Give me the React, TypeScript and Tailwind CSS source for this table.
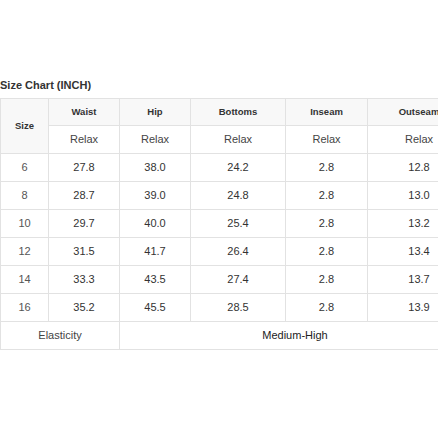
import React from 'react';

const rows = [
  { size: '6', waist: '27.8', hip: '38.0', bottoms: '24.2', inseam: '2.8', outseam: '12.8' },
  { size: '8', waist: '28.7', hip: '39.0', bottoms: '24.8', inseam: '2.8', outseam: '13.0' },
  { size: '10', waist: '29.7', hip: '40.0', bottoms: '25.4', inseam: '2.8', outseam: '13.2' },
  { size: '12', waist: '31.5', hip: '41.7', bottoms: '26.4', inseam: '2.8', outseam: '13.4' },
  { size: '14', waist: '33.3', hip: '43.5', bottoms: '27.4', inseam: '2.8', outseam: '13.7' },
  { size: '16', waist: '35.2', hip: '45.5', bottoms: '28.5', inseam: '2.8', outseam: '13.9' },
];

const cell = 'border border-[#e2e2e2] text-center align-middle p-0';
const head = `${cell} bg-[#f8f8f8] font-bold text-[9.5px] text-[#333]`;

const App: React.FC = () => {
  return (
    <div className="w-[438px] h-[438px] overflow-hidden bg-white font-['Liberation_Sans',Arial,sans-serif] text-[#333]">
      <div className="pt-[78px]">
        <h2 className="text-[11px] leading-[14px] font-bold text-[#333] mb-[6px]">Size Chart (INCH)</h2>
        <table className="border-collapse table-fixed w-[470px] text-[11px]">
          <colgroup>
            <col className="w-[48px]" />
            <col className="w-[71px]" />
            <col className="w-[71px]" />
            <col className="w-[95px]" />
            <col className="w-[82px]" />
            <col className="w-[103px]" />
          </colgroup>
          <thead>
            <tr className="h-[27px]">
              <th rowSpan={2} className={head}>Size</th>
              <th className={head}>Waist</th>
              <th className={head}>Hip</th>
              <th className={head}>Bottoms</th>
              <th className={head}>Inseam</th>
              <th className={head}>Outseam</th>
            </tr>
            <tr className="h-[28px]">
              {['w', 'h', 'b', 'i', 'o'].map((k) => (
                <td key={k} className={`${cell} text-[#444]`}>Relax</td>
              ))}
            </tr>
          </thead>
          <tbody>
            {rows.map((r) => (
              <tr key={r.size} className="h-[28px]">
                <td className={`${cell} text-[#555]`}>{r.size}</td>
                <td className={cell}>{r.waist}</td>
                <td className={cell}>{r.hip}</td>
                <td className={cell}>{r.bottoms}</td>
                <td className={cell}>{r.inseam}</td>
                <td className={cell}>{r.outseam}</td>
              </tr>
            ))}
            <tr className="h-[28px]">
              <td colSpan={2} className={`${cell} text-[#444]`}>Elasticity</td>
              <td colSpan={4} className={`${cell} text-[#222]`}>Medium-High</td>
            </tr>
          </tbody>
        </table>
      </div>
    </div>
  );
};

export default App;
